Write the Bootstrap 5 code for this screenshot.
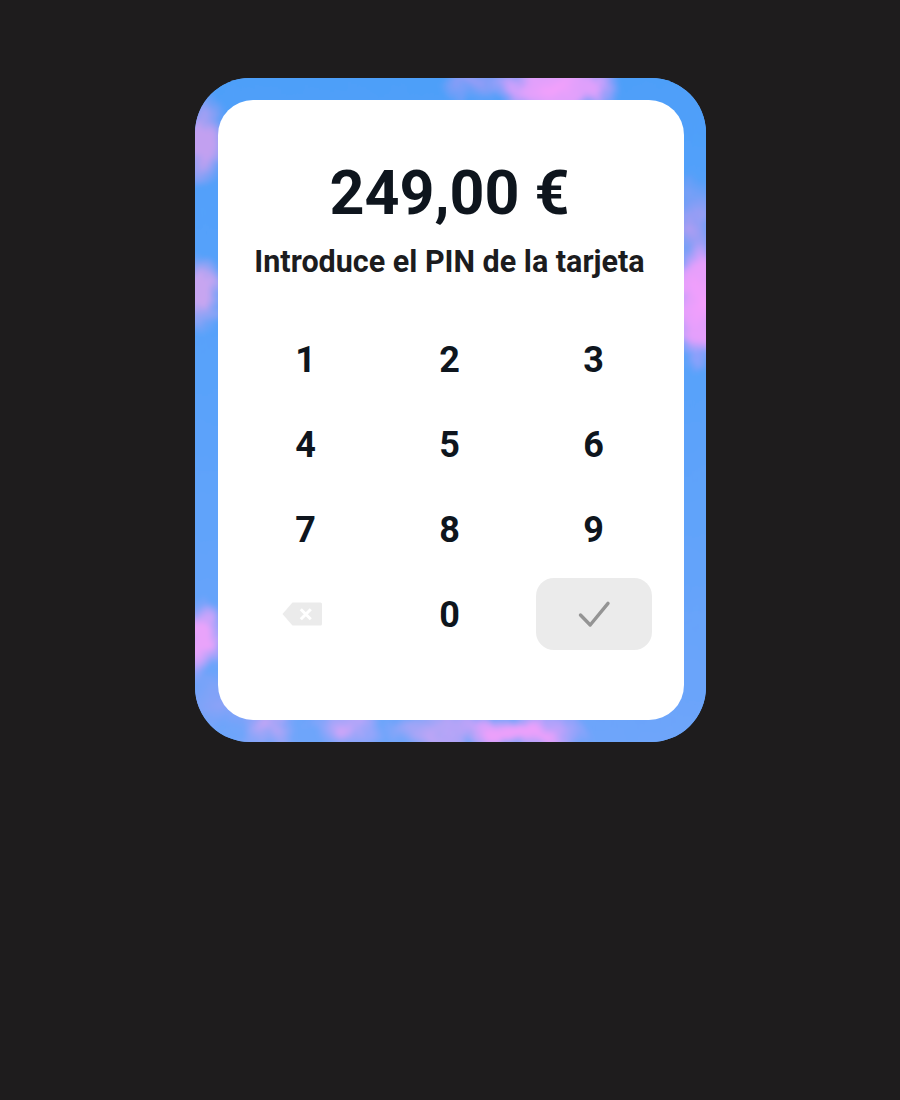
<!DOCTYPE html>
<html lang="es">
<head>
    <meta charset="UTF-8">
    <meta name="viewport" content="width=device-width, initial-scale=1.0">
    <title>PIN de la tarjeta</title>
    <link rel="stylesheet" href="https://cdn.jsdelivr.net/npm/bootstrap@5.3.0/dist/css/bootstrap.min.css">
    <style>
        html, body { height: 100%; }
        body { background: #1e1c1d; font-family: Roboto, "Liberation Sans", sans-serif; }
        .pin-page { padding-top: 78px; }
        .pin-frame {
            position: relative;
            overflow: hidden;
            width: 511px;
            height: 664px;
            padding: 22px 22px 22px 23px;
            border-radius: 55px;
            background: #5ea3fa;
        }
        /* cloudy border: gradients get pushed around by the svg filter */
        .pin-clouds {
            position: absolute;
            inset: -30px;
            filter: url(#pinClouds);
            background-color: #5ea3fa;
            background-image:
                radial-gradient(ellipse 66px 32px at 390px 38px, #f6a0fb 0%, rgba(246,160,251,.85) 55%, rgba(246,160,251,0) 100%),
                radial-gradient(ellipse 38px 22px at 310px 36px, rgba(190,155,245,.7), rgba(190,155,245,0)),
                radial-gradient(ellipse 36px 62px at 535px 255px, #fa9ffc 0%, rgba(250,159,252,.85) 55%, rgba(250,159,252,0) 100%),
                radial-gradient(ellipse 28px 50px at 530px 180px, rgba(200,155,240,.8), rgba(200,155,240,0)),
                radial-gradient(ellipse 28px 42px at 35px 245px, rgba(205,165,240,.95) 35%, rgba(205,165,240,0) 100%),
                radial-gradient(ellipse 32px 48px at 35px 90px, rgba(200,160,240,.95) 30%, rgba(200,160,240,0) 100%),
                radial-gradient(ellipse 28px 46px at 35px 592px, #e9a3fa 25%, rgba(233,163,250,0) 100%),
                radial-gradient(ellipse 50px 30px at 60px 655px, rgba(160,160,245,.7), rgba(160,160,245,0)),
                radial-gradient(ellipse 34px 24px at 105px 680px, rgba(215,165,245,.85), rgba(215,165,245,0)),
                radial-gradient(ellipse 36px 24px at 180px 682px, rgba(225,165,248,.9), rgba(225,165,248,0)),
                radial-gradient(ellipse 54px 24px at 270px 684px, rgba(205,165,245,.9), rgba(205,165,245,0)),
                radial-gradient(ellipse 78px 24px at 350px 684px, #eba0fa 30%, rgba(235,160,250,0) 100%),
                linear-gradient(180deg, #4d9ff9 0%, #5aa2fa 50%, #70a5fa 100%);
        }
        .pin-panel {
            position: relative;
            height: 100%;
            padding: 58px 32px 0 30px;
            border-radius: 35px;
            background: #fff;
        }
        .pin-amount { margin: 0; font-size: 61px; line-height: 70px; font-weight: 700; color: #0e151d; }
        .pin-label { margin: 16px 0 0; font-size: 30.500px; line-height: 36px; font-weight: 700; color: #1c1c1e; }
        .pin-keys {
            display: grid;
            grid-template-columns: repeat(3, 116px);
            grid-auto-rows: 72px;
            gap: 13px 28px;
            margin-top: 43px;
        }
        .pin-key {
            border: 0;
            padding: 1px 0 0;
            border-radius: 18px;
            background: transparent;
            font-size: 36px;
            font-weight: 700;
            color: #0e151d;
        }
        .pin-key-ok { background: #ebebeb; padding: 0; }
        .pin-del-icon { margin: -1px 8px 0 0; }
    </style>
</head>
<body>

<svg width="0" height="0" class="d-block">
    <filter id="pinClouds" x="0" y="0" width="100%" height="100%">
        <feTurbulence type="fractalNoise" baseFrequency="0.035" numOctaves="4" seed="7"/>
        <feDisplacementMap in="SourceGraphic" scale="34" xChannelSelector="R" yChannelSelector="G"/>
        <feGaussianBlur stdDeviation="2.500"/>
    </filter>
</svg>

<div class="pin-page d-flex justify-content-center">
    <div class="pin-frame">
        <div class="pin-clouds"></div>
        <div class="pin-panel text-center">
            <h1 class="pin-amount">249,00 €</h1>
            <p class="pin-label">Introduce el PIN de la tarjeta</p>

            <div class="pin-keys">
                <button type="button" class="pin-key">1</button>
                <button type="button" class="pin-key">2</button>
                <button type="button" class="pin-key">3</button>
                <button type="button" class="pin-key">4</button>
                <button type="button" class="pin-key">5</button>
                <button type="button" class="pin-key">6</button>
                <button type="button" class="pin-key">7</button>
                <button type="button" class="pin-key">8</button>
                <button type="button" class="pin-key">9</button>
                <button type="button" class="pin-key d-flex align-items-center justify-content-center" aria-label="Borrar">
                    <svg class="pin-del-icon" width="40" height="24" viewBox="0 0 40 24">
                        <path d="M10.500 .5H38.500a1.500 1.500 0 0 1 1.500 1.500V22a1.500 1.500 0 0 1-1.500 1.500H10.500L.5 12z" fill="#ebebeb"/>
                        <path d="M18.800 7.200l10 10M28.800 7.200l-10 10" stroke="#fff" stroke-width="3" fill="none"/>
                    </svg>
                </button>
                <button type="button" class="pin-key">0</button>
                <button type="button" class="pin-key pin-key-ok d-flex align-items-center justify-content-center" aria-label="Confirmar">
                    <svg width="36" height="30" viewBox="0 0 36 30">
                        <path d="M4.500 16L14.200 26L32 4.400" stroke="#949494" stroke-width="3.400" stroke-linecap="round" stroke-linejoin="round" fill="none"/>
                    </svg>
                </button>
            </div>
        </div>
    </div>
</div>

<script src="https://cdn.jsdelivr.net/npm/bootstrap@5.3.0/dist/js/bootstrap.bundle.min.js"></script>
</body>
</html>
